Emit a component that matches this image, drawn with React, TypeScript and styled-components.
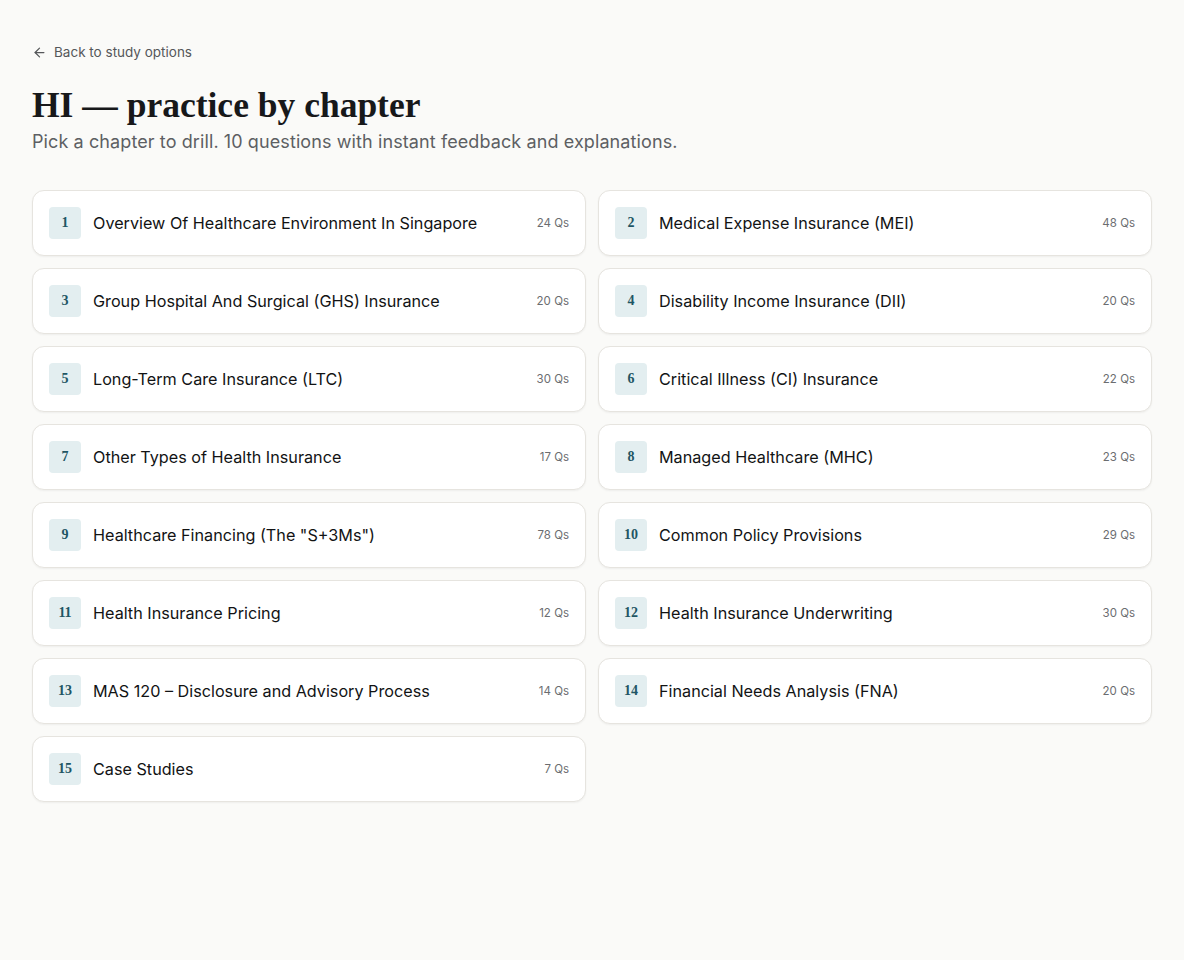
import React from 'react'
import styled, { createGlobalStyle } from 'styled-components'

const chapters = [
  { n: 1, title: 'Overview Of Healthcare Environment In Singapore', qs: 24 },
  { n: 2, title: 'Medical Expense Insurance (MEI)', qs: 48 },
  { n: 3, title: 'Group Hospital And Surgical (GHS) Insurance', qs: 20 },
  { n: 4, title: 'Disability Income Insurance (DII)', qs: 20 },
  { n: 5, title: 'Long-Term Care Insurance (LTC)', qs: 30 },
  { n: 6, title: 'Critical Illness (CI) Insurance', qs: 22 },
  { n: 7, title: 'Other Types of Health Insurance', qs: 17 },
  { n: 8, title: 'Managed Healthcare (MHC)', qs: 23 },
  { n: 9, title: 'Healthcare Financing (The "S+3Ms")', qs: 78 },
  { n: 10, title: 'Common Policy Provisions', qs: 29 },
  { n: 11, title: 'Health Insurance Pricing', qs: 12 },
  { n: 12, title: 'Health Insurance Underwriting', qs: 30 },
  { n: 13, title: 'MAS 120 – Disclosure and Advisory Process', qs: 14 },
  { n: 14, title: 'Financial Needs Analysis (FNA)', qs: 20 },
  { n: 15, title: 'Case Studies', qs: 7 },
]

const App = () => {
  return (
    <>
      <GlobalStyle />
      <Page>
        <BackLink href='#'>
          <svg width='15' height='15' viewBox='0 0 24 24' fill='none' stroke='currentColor' strokeWidth='2' strokeLinecap='round' strokeLinejoin='round'>
            <path d='M19 12H5' />
            <path d='M12 19l-7-7 7-7' />
          </svg>
          Back to study options
        </BackLink>

        <Title>HI — practice by chapter</Title>
        <Subtitle>Pick a chapter to drill. 10 questions with instant feedback and explanations.</Subtitle>

        <ChapterGrid>
          {chapters.map((c) => (
            <ChapterCard key={c.n}>
              <NumberBadge>{c.n}</NumberBadge>
              <ChapterName>{c.title}</ChapterName>
              <QuestionCount>{c.qs} Qs</QuestionCount>
            </ChapterCard>
          ))}
        </ChapterGrid>
      </Page>
    </>
  )
}

export default App

const GlobalStyle = createGlobalStyle`
  html, body {
    margin: 0;
    padding: 0;
    background: #fafaf8;
  }

  body {
    font-family: Inter, 'Noto Sans', sans-serif;
    color: #1b1b1b;
    min-height: 960px;
  }
`

const Page = styled.main`
  padding: 42px 32px 40px;
  max-width: 1120px;
`

const BackLink = styled.a`
  display: inline-flex;
  align-items: center;
  gap: 7px;
  font-size: 13.5px;
  color: #55575a;
  text-decoration: none;
  line-height: 20px;
`

const Title = styled.h1`
  margin: 22px 0 0;
  font-family: 'Liberation Serif', 'DejaVu Serif', serif;
  font-weight: 700;
  font-size: 35.5px;
  line-height: 38px;
  letter-spacing: 0;
  color: #17181a;
`

const Subtitle = styled.p`
  margin: 5px 0 0;
  font-size: 18px;
  line-height: 26px;
  color: #5d5f63;
  letter-spacing: 0.1px;
`

const ChapterGrid = styled.div`
  display: grid;
  grid-template-columns: 1fr 1fr;
  gap: 12px;
  margin-top: 35px;
`

const ChapterCard = styled.div`
  display: flex;
  align-items: center;
  gap: 12px;
  height: 66px;
  box-sizing: border-box;
  padding: 0 16px;
  background: #ffffff;
  border: 1px solid #e6e4df;
  border-radius: 12px;
  box-shadow: 0 1px 2px rgba(0, 0, 0, 0.05);
  cursor: pointer;
`

const NumberBadge = styled.span`
  display: flex;
  align-items: center;
  justify-content: center;
  flex-shrink: 0;
  width: 32px;
  height: 32px;
  border-radius: 4px;
  background: #e3eef0;
  color: #1f5664;
  font-family: 'Liberation Serif', 'DejaVu Serif', serif;
  font-weight: 700;
  font-size: 14px;
`

const ChapterName = styled.span`
  flex: 1;
  font-size: 16.2px;
  color: #121314;
  white-space: nowrap;
  overflow: hidden;
  text-overflow: ellipsis;
`

const QuestionCount = styled.span`
  font-size: 11.5px;
  color: #6b6d70;
  flex-shrink: 0;
`
